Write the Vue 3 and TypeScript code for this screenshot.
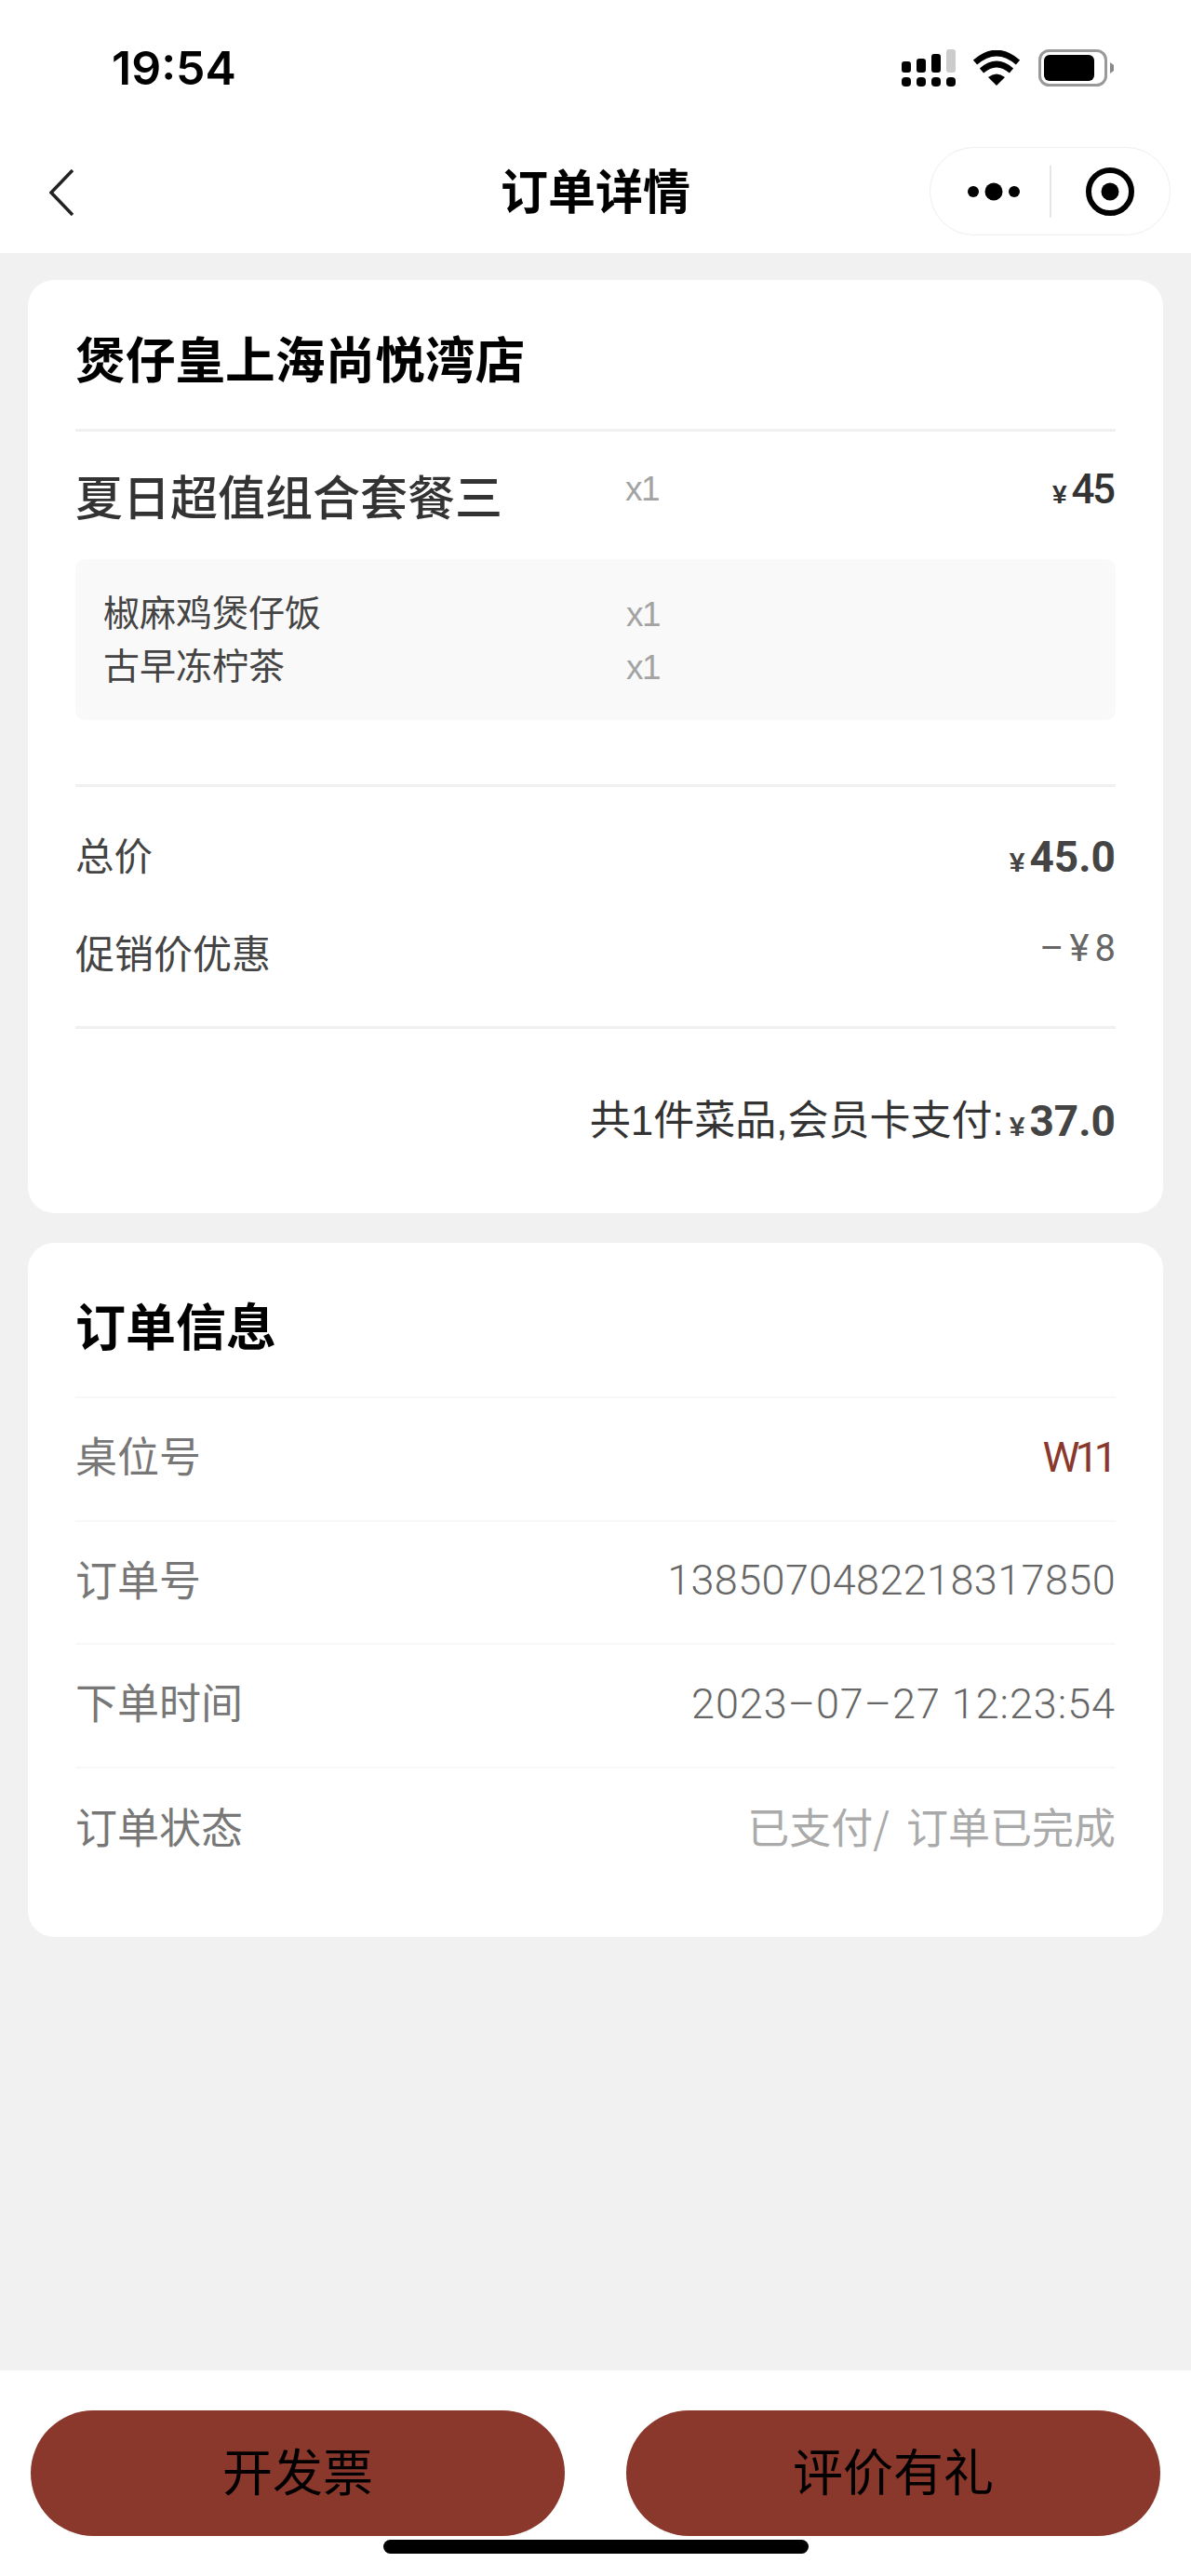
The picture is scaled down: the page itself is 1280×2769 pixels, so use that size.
<script setup lang="ts">
interface InfoRow { label: string; value: string; kind: string }
const subItems: string[] = ['椒麻鸡煲仔饭', '古早冻柠茶']
const rows: InfoRow[] = [
  { label: '桌位号', value: 'W11', kind: 'red' },
  { label: '订单号', value: '1385070482218317850', kind: 'num' },
  { label: '下单时间', value: '2023–07–27 12:23:54', kind: 'num date' },
  { label: '订单状态', value: '已支付/ 订单已完成', kind: 'pale' },
]
const signal: { x: number; y: number; h: number; c: string }[] = [
  { x: 0, y: 13, h: 12, c: '#000' },
  { x: 16, y: 10, h: 15, c: '#000' },
  { x: 32, y: 5, h: 20, c: '#000' },
  { x: 48, y: 0, h: 25, c: '#ccc' },
]
</script>

<template>
  <div class="page">
    <header class="top">
      <div class="status">
        <span class="time">19:54</span>
        <div class="status-icons">
          <svg class="signal" width="58" height="40" viewBox="0 0 58 40">
            <rect v-for="b in signal" :key="b.x" :x="b.x" :y="b.y" width="10" :height="b.h" rx="3" :fill="b.c" />
            <rect v-for="b in signal" :key="'d' + b.x" :x="b.x" y="30" width="10" height="10" rx="4" fill="#000" />
          </svg>
          <svg class="wifi" width="50" height="38" viewBox="0 0 50 38">
            <path d="M25 38 L16 29 Q25 22 34 29 Z" fill="#000" />
            <path d="M9 22 Q25 8 41 22" fill="none" stroke="#000" stroke-width="6.5" />
            <path d="M2 13 Q25 -7 48 13" fill="none" stroke="#000" stroke-width="6.5" />
          </svg>
          <svg class="battery" width="82" height="40" viewBox="0 0 82 40">
            <rect x="1.5" y="1.5" width="71" height="37" rx="10" fill="#fff" stroke="#999" stroke-width="3" />
            <rect x="6" y="6" width="54" height="28" rx="6" fill="#000" />
            <path d="M77 14 L81 17 V23 L77 26 Z" fill="#888" />
          </svg>
        </div>
      </div>
      <nav class="nav">
        <svg class="back" width="26" height="50" viewBox="0 0 26 50">
          <path d="M25 1 L2 25 L25 49" fill="none" stroke="#222" stroke-width="3.5" />
        </svg>
        <h1 class="nav-title">订单详情</h1>
        <div class="capsule">
          <svg class="more" width="58" height="20" viewBox="0 0 58 20">
            <circle cx="6" cy="10" r="6" fill="#000" />
            <circle cx="28" cy="10" r="9.5" fill="#000" />
            <circle cx="50" cy="10" r="6" fill="#000" />
          </svg>
          <span class="cap-line"></span>
          <svg class="target" width="52" height="52" viewBox="0 0 52 52">
            <circle cx="26" cy="26" r="23" fill="none" stroke="#000" stroke-width="6" />
            <circle cx="26" cy="26" r="9.5" fill="#000" />
          </svg>
        </div>
      </nav>
    </header>

    <main class="content">
      <section class="card">
        <h2 class="shop">煲仔皇上海尚悦湾店</h2>
        <div class="rule"></div>
        <div class="item">
          <span class="item-name">夏日超值组合套餐三</span>
          <span class="qty">x1</span>
          <span class="item-price"><i class="yen">¥</i>45</span>
        </div>
        <div class="subs">
          <div v-for="s in subItems" :key="s" class="sub">
            <span class="sub-name">{{ s }}</span>
            <span class="qty">x1</span>
          </div>
        </div>
        <div class="rule rule-b"></div>
        <div class="sums">
          <div class="sum">
            <span class="sum-label">总价</span>
            <span class="sum-total"><i class="yen yen-b">¥</i>45.0</span>
          </div>
          <div class="sum">
            <span class="sum-label sum-promo">促销价优惠</span>
            <span class="sum-off">–¥8</span>
          </div>
        </div>
        <div class="rule"></div>
        <div class="pay">
          <span class="pay-text">共1件菜品,会员卡支付:</span>
          <span class="sum-total"><i class="yen yen-b">¥</i>37.0</span>
        </div>
      </section>

      <section class="card">
        <h2 class="info-title">订单信息</h2>
        <div class="info-list">
          <div v-for="r in rows" :key="r.label" class="info">
            <span class="info-label">{{ r.label }}</span>
            <span class="info-value" :class="r.kind">{{ r.value }}</span>
          </div>
        </div>
      </section>
    </main>

    <footer class="footer">
      <button class="btn" type="button">开发票</button>
      <button class="btn" type="button">评价有礼</button>
    </footer>
    <div class="home"></div>
  </div>
</template>

<style scoped>
.page {
  position: relative;
  width: 1280px;
  height: 2769px;
  display: flex;
  flex-direction: column;
  background: #f1f1f1;
  overflow: hidden;
  font-family: "Liberation Sans", "Noto Sans CJK SC", sans-serif;
  color: #333;
}
.top { background: #fff; height: 272px; flex: none; }
.status {
  height: 146px;
  padding: 0 82px 0 120px;
  display: flex;
  align-items: center;
  justify-content: space-between;
  box-sizing: border-box;
}
.time {
  font-family: "Inter", sans-serif;
  font-size: 50px;
  font-weight: 600;
  color: #000;
  line-height: 60px;
}
.status-icons { display: flex; align-items: center; }
.signal { margin-right: 19px; }
.wifi { margin-right: 20px; }
.nav {
  height: 126px;
  position: relative;
  display: flex;
  align-items: center;
  justify-content: center;
  margin-top: -6px;
}
.back { position: absolute; left: 53px; top: 42px; }
.nav-title {
  margin: 0;
  font-family: "Noto Sans CJK SC", sans-serif;
  font-size: 51px;
  line-height: 60px;
  font-weight: 700;
  color: #000;
}
.capsule {
  position: absolute;
  left: 999px;
  top: 18px;
  width: 259px;
  height: 95px;
  box-sizing: border-box;
  border: 1.5px solid #eee;
  border-radius: 48px;
  display: flex;
  align-items: center;
}
.more { margin-left: 40px; }
.cap-line { width: 2px; height: 56px; background: #e6e6e6; margin-left: 30px; }
.target { margin-left: 37px; }

.content {
  padding: 29px 30px 0;
  display: flex;
  flex-direction: column;
  gap: 32px;
}
.card {
  background: #fff;
  border-radius: 28px;
  padding: 0 51px;
}
.shop {
  margin: 53px 0 47px;
  font-family: "Noto Sans CJK SC", sans-serif;
  font-size: 53.7px;
  line-height: 60px;
  font-weight: 700;
  color: #000;
}
.rule { height: 3px; background: #f0f0f0; }
.rule-b { margin-top: 69px; }
.item {
  display: flex;
  align-items: flex-start;
  padding: 41px 0 36px;
  height: 60px;
}
.item-name {
  width: 591px;
  margin-top: -3px;
  font-family: "Noto Sans CJK SC", sans-serif;
  font-size: 51px;
  line-height: 60px;
  font-weight: 500;
  color: #333;
}
.qty {
  font-family: "Liberation Sans", sans-serif;
  font-size: 37px;
  line-height: 42px;
  letter-spacing: -1.5px;
  color: #a3a3a3;
}
.item-price {
  margin-left: auto;
  margin-right: 2.5px;
  font-family: "Roboto", sans-serif;
  font-size: 44px;
  line-height: 42px;
  font-weight: 500;
  letter-spacing: -2.5px;
  color: #333;
}
.yen {
  font-family: "Liberation Sans", sans-serif;
  font-style: normal;
  font-weight: 700;
  font-size: 28px;
  letter-spacing: 0;
  margin-right: 5px;
}
.yen-b { font-size: 30px; margin-right: 5px; }
.subs {
  background: #f9f9f9;
  border-radius: 10px;
  padding: 31px 30px 28px;
}
.sub { display: flex; align-items: center; height: 57px; }
.sub-name {
  width: 562px;
  padding-bottom: 9px;
  font-family: "Noto Sans CJK SC", sans-serif;
  font-size: 39px;
  line-height: 50px;
  color: #444;
}
.sums { padding: 22px 0 25px; }
.sum {
  height: 105px;
  display: flex;
  align-items: center;
  justify-content: space-between;
}
.sum-label {
  padding-bottom: 6px;
  font-family: "Noto Sans CJK SC", sans-serif;
  font-size: 41.5px;
  line-height: 60px;
  color: #444;
}
.sum-promo { font-size: 42px; }
.sum-total {
  padding-top: 6px;
  font-family: "Roboto", sans-serif;
  font-size: 46px;
  line-height: 60px;
  font-weight: 700;
  color: #444;
}
.sum-off {
  font-family: "Roboto", sans-serif;
  font-size: 40px;
  line-height: 60px;
  letter-spacing: 6px;
  margin-right: -6px;
  padding-bottom: 12px;
  color: #666;
}
.pay {
  display: flex;
  justify-content: flex-end;
  align-items: center;
  padding: 69px 0;
  height: 60px;
}
.pay-text {
  font-family: "Liberation Sans", "Noto Sans CJK SC", sans-serif;
  font-size: 44px;
  line-height: 60px;
  color: #333;
  margin-right: 6px;
}
.info-title {
  margin: 58px 0 47px;
  font-family: "Noto Sans CJK SC", sans-serif;
  font-size: 54px;
  line-height: 60px;
  font-weight: 700;
  color: #000;
}
.info-list { border-top: 2px solid #f8f8f8; padding-bottom: 49px; }
.info {
  height: 132.5px;
  box-sizing: border-box;
  display: flex;
  align-items: center;
  justify-content: space-between;
  border-bottom: 2px solid #f8f8f8;
}
.info:last-child { border-bottom: 0; }
.info-label {
  padding-bottom: 8px;
  font-family: "Noto Sans CJK SC", sans-serif;
  font-size: 45px;
  line-height: 60px;
  color: #777;
}
.info-value {
  padding-bottom: 3px;
  font-family: "Roboto", sans-serif;
  font-weight: 300;
  font-size: 45px;
  line-height: 60px;
}
.info-value.num { color: #666; letter-spacing: 0.4px; }
.info-value.date { letter-spacing: 0.95px; }
.info-value.red { color: #8a372c; letter-spacing: -5px; margin-right: 3px; font-weight: 400; }
.info-value.pale {
  padding-bottom: 8px;
  color: #aaa;
  font-size: 45px;
  font-weight: 400;
  word-spacing: 8px;
  font-family: "Noto Sans CJK SC", sans-serif;
}
.footer {
  margin-top: auto;
  height: 221px;
  box-sizing: border-box;
  background: #fff;
  padding: 43px 33px 0;
  display: flex;
  justify-content: space-between;
  align-items: flex-start;
}
.btn {
  width: 574px;
  height: 135px;
  border: 0;
  padding: 0 0 7px;
  border-radius: 68px;
  background: #8a372c;
  color: #000;
  font-family: "Noto Sans CJK SC", sans-serif;
  font-size: 54px;
  line-height: 60px;
}
.home {
  position: absolute;
  left: 412px;
  top: 2730px;
  width: 457px;
  height: 15px;
  border-radius: 8px;
  background: #000;
}
</style>
